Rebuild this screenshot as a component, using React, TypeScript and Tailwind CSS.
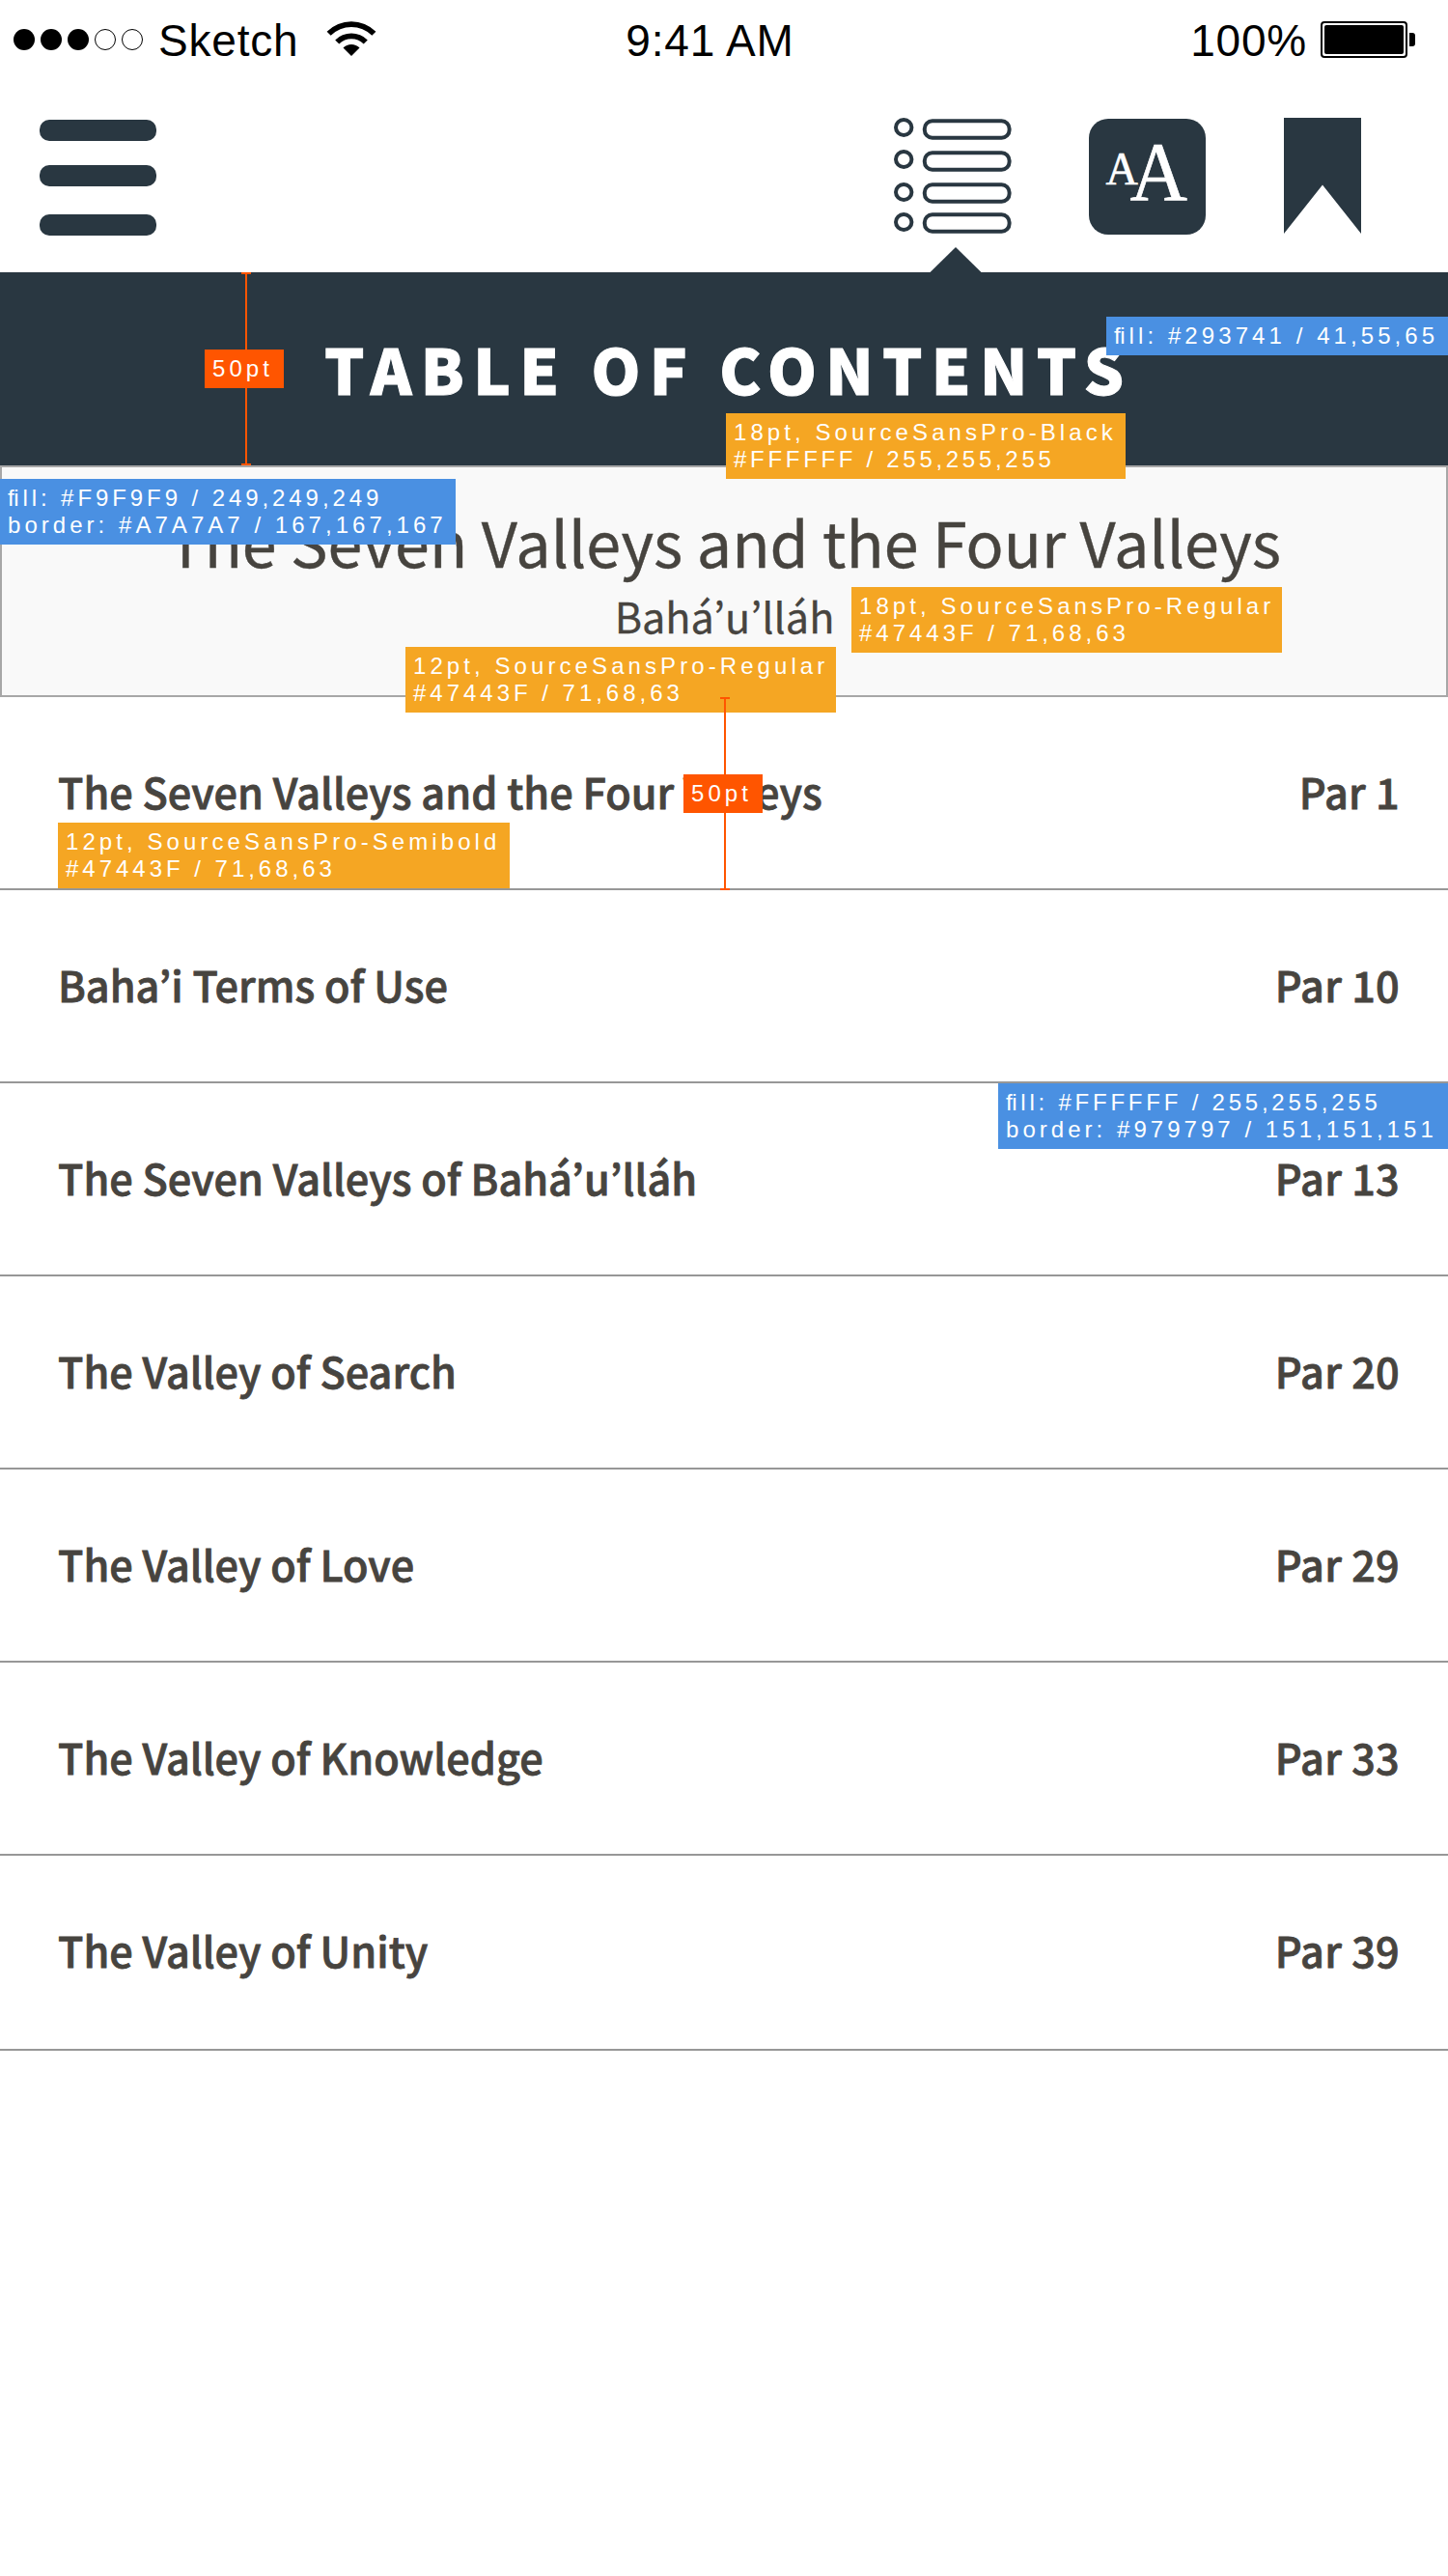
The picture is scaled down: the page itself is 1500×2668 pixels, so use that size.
import type { ReactNode } from 'react';

const chapters = [
  { title: 'The Seven Valleys and the Four Valleys', par: 'Par 1' },
  { title: 'Baha’i Terms of Use', par: 'Par 10' },
  { title: 'The Seven Valleys of Bahá’u’lláh', par: 'Par 13' },
  { title: 'The Valley of Search', par: 'Par 20' },
  { title: 'The Valley of Love', par: 'Par 29' },
  { title: 'The Valley of Knowledge', par: 'Par 33' },
  { title: 'The Valley of Unity', par: 'Par 39' },
];

function Note({ className, children }: { className: string; children: ReactNode }) {
  return (
    <div
      className={`absolute overflow-hidden whitespace-nowrap pl-[8px] pt-[6px] font-['Liberation_Sans',sans-serif] text-[24px] leading-[28px] font-normal tracking-[4.08px] text-white ${className}`}
    >
      {children}
    </div>
  );
}

function Fill() {
  return (
    <>
      <span className="tracking-[-0.5px]">f</span>ill
    </>
  );
}

function Measure({ className }: { className: string }) {
  return (
    <div className={`absolute flex w-[10px] flex-col items-center ${className}`}>
      <div className="h-[2px] w-full bg-[#ff5500]" />
      <div className="w-[2px] flex-1 bg-[#ff5500]" />
      <div className="h-[2px] w-full bg-[#ff5500]" />
    </div>
  );
}

function StatusBar() {
  return (
    <div className="grid h-[84px] grid-cols-3 font-['Liberation_Sans',sans-serif] text-[46px] leading-[84px] tracking-[0.8px] text-black">
      <div className="flex items-center pl-[14px]">
        <div className="-mt-[2px] flex gap-[6px]">
          <span className="size-[22px] rounded-full bg-black" />
          <span className="size-[22px] rounded-full bg-black" />
          <span className="size-[22px] rounded-full bg-black" />
          <span className="size-[22px] rounded-full border-[1.5px] border-black" />
          <span className="size-[22px] rounded-full border-[1.5px] border-black" />
        </div>
        <span className="ml-[16px]">Sketch</span>
        <svg className="-mt-[4px] ml-[29px]" width="52" height="36" viewBox="0 0 52 36">
          <path d="M0.6 10.8 A36 36 0 0 1 51.4 10.8 L47.3 14.8 A30.3 30.3 0 0 0 4.7 14.8 Z" />
          <path d="M9.2 19.4 A24 24 0 0 1 42.8 19.4 L38.7 23.5 A18 18 0 0 0 13.3 23.5 Z" />
          <path d="M17.5 27.5 A12 12 0 0 1 34.5 27.5 L26 36 Z" />
        </svg>
      </div>
      <div className="flex justify-center pr-[29px]">9:41 AM</div>
      <div className="flex items-center justify-end pr-[34px]">
        <span className="mr-[14px]">100%</span>
        <span className="-mt-[2px] flex h-[38px] w-[90px] rounded-[4px] border-2 border-black p-[2px]">
          <span className="flex-1 rounded-[2px] bg-black" />
        </span>
        <span className="-mt-[2px] ml-[2px] h-[14px] w-[6px] rounded-r-[3px] bg-black" />
      </div>
    </div>
  );
}

function ListIcon() {
  return (
    <svg width="122" height="120" viewBox="0 0 122 120" fill="none" stroke="#293741" strokeWidth="4">
      <ellipse cx="10.2" cy="10" rx="8.2" ry="8" />
      <ellipse cx="10.2" cy="43" rx="8.2" ry="8" />
      <ellipse cx="10.2" cy="77" rx="8.2" ry="8" />
      <ellipse cx="10.2" cy="108" rx="8.2" ry="8" />
      <rect x="31.8" y="3.2" width="87.8" height="17.6" rx="8" />
      <rect x="31.8" y="36.2" width="87.8" height="17.6" rx="8" />
      <rect x="31.8" y="69.2" width="87.8" height="17.6" rx="8" />
      <rect x="31.8" y="100.2" width="87.8" height="17.6" rx="8" />
    </svg>
  );
}

function TextSizeIcon() {
  return (
    <svg
      className="ml-[80px] mt-px rounded-[20px] bg-[#293741] font-['Liberation_Serif',serif]"
      width="121"
      height="120"
      viewBox="0 0 121 120"
      fill="#fff"
      stroke="#fff"
      strokeWidth="0.7"
    >
      <text x="17.5" y="67.7" fontSize="48.5" textLength="33.3" lengthAdjust="spacingAndGlyphs">
        A
      </text>
      <text x="42.4" y="83.7" fontSize="86" textLength="59.4" lengthAdjust="spacingAndGlyphs">
        A
      </text>
    </svg>
  );
}

function Toolbar() {
  return (
    <div className="flex h-[198px] items-start pl-[41px] pt-[38px]">
      <div className="flex w-[121px] flex-col pt-[2px]">
        <span className="h-[22px] rounded-[10px] bg-[#293741]" />
        <span className="mt-[25px] h-[22px] rounded-[10px] bg-[#293741]" />
        <span className="mt-[29px] h-[22px] rounded-[10px] bg-[#293741]" />
      </div>
      <div className="ml-[763.5px]">
        <ListIcon />
        <svg className="ml-[37px] mt-[14px]" width="54" height="26" viewBox="0 0 54 26">
          <path d="M0.5 26 L27 0 L53.5 26 Z" fill="#293741" />
        </svg>
      </div>
      <TextSizeIcon />
      <svg className="ml-[81px]" width="80" height="120" viewBox="0 0 80 120">
        <path d="M0 0 H80 V120 L40 69.5 L0 120 Z" fill="#293741" />
      </svg>
    </div>
  );
}

export default function App() {
  return (
    <main className="relative h-[2668px] w-[1500px] overflow-hidden bg-white font-['Noto_Sans_CJK_JP','Noto_Sans',sans-serif] text-[#47443f]">
      <StatusBar />
      <Toolbar />
      <h1 className="h-[200px] bg-[#293741] pl-[336px] text-[64.8px] leading-[198px] font-black tracking-[9.3px] text-white [-webkit-text-stroke:1px_#fff]">
        TABLE OF CONTENTS
      </h1>
      <section className="flex h-[240px] flex-col items-center border-2 border-[#a7a7a7] bg-[#f9f9f9] pt-[36px]">
        <h2 className="text-[64.6px] leading-[80px] [-webkit-text-stroke:0.4px_#47443f]">
          The Seven Valleys and the Four Valleys
        </h2>
        <p className="pl-px text-[43.2px] leading-[74px] [-webkit-text-stroke:0.3px_#47443f]">Bahá’u’lláh</p>
      </section>
      <ul>
        {chapters.map((c) => (
          <li
            key={c.title}
            className="flex h-[200px] justify-between border-b-2 border-[#979797] pl-[60px] pr-[50px] text-[43.2px] leading-[194px] font-medium [-webkit-text-stroke:0.8px_#47443f] last:h-[202px]"
          >
            <span className="tracking-[0.03px]">{c.title}</span>
            <span className="tracking-[0.3px]">{c.par}</span>
          </li>
        ))}
      </ul>

      <Note className="left-[1146px] top-[328px] h-[40px] w-[354px] bg-[#4a90e2]">
        <Fill />: #293741 / 41,55,65
      </Note>
      <Note className="left-[752px] top-[428px] h-[68px] w-[414px] bg-[#f5a623]">
        18pt, SourceSansPro-Black
        <br />
        <span className="tracking-[3.7px]">#FFFFFF / 255,255,255</span>
      </Note>
      <Note className="left-0 top-[496px] h-[68px] w-[472px] bg-[#4a90e2]">
        <span className="tracking-[3.92px]">
          <Fill />: #F9F9F9 / 249,249,249
        </span>
        <br />
        <span className="tracking-[4.04px]">border: #A7A7A7 / 167,167,167</span>
      </Note>
      <Note className="left-[882px] top-[608px] h-[68px] w-[446px] bg-[#f5a623]">
        18pt, SourceSansPro-Regular
        <br />
        <span className="tracking-[3.98px]">#47443F / 71,68,63</span>
      </Note>
      <Note className="left-[420px] top-[670px] h-[68px] w-[446px] bg-[#f5a623]">
        12pt, SourceSansPro-Regular
        <br />
        <span className="tracking-[3.98px]">#47443F / 71,68,63</span>
      </Note>
      <Note className="left-[60px] top-[852px] h-[68px] w-[468px] bg-[#f5a623]">
        12pt, SourceSansPro-Semibold
        <br />
        <span className="tracking-[3.98px]">#47443F / 71,68,63</span>
      </Note>
      <Note className="left-[1034px] top-[1122px] h-[68px] w-[466px] bg-[#4a90e2]">
        <span className="tracking-[3.78px]">
          <Fill />: #FFFFFF / 255,255,255
        </span>
        <br />
        <span className="tracking-[4.04px]">border: #979797 / 151,151,151</span>
      </Note>
      <Measure className="left-[250px] top-[282px] h-[200px]" />
      <Note className="left-[212px] top-[362px] h-[40px] w-[82px] bg-[#ff5500]">50pt</Note>
      <Measure className="left-[746px] top-[722px] h-[200px]" />
      <Note className="left-[708px] top-[802px] h-[40px] w-[82px] bg-[#ff5500]">50pt</Note>
    </main>
  );
}
